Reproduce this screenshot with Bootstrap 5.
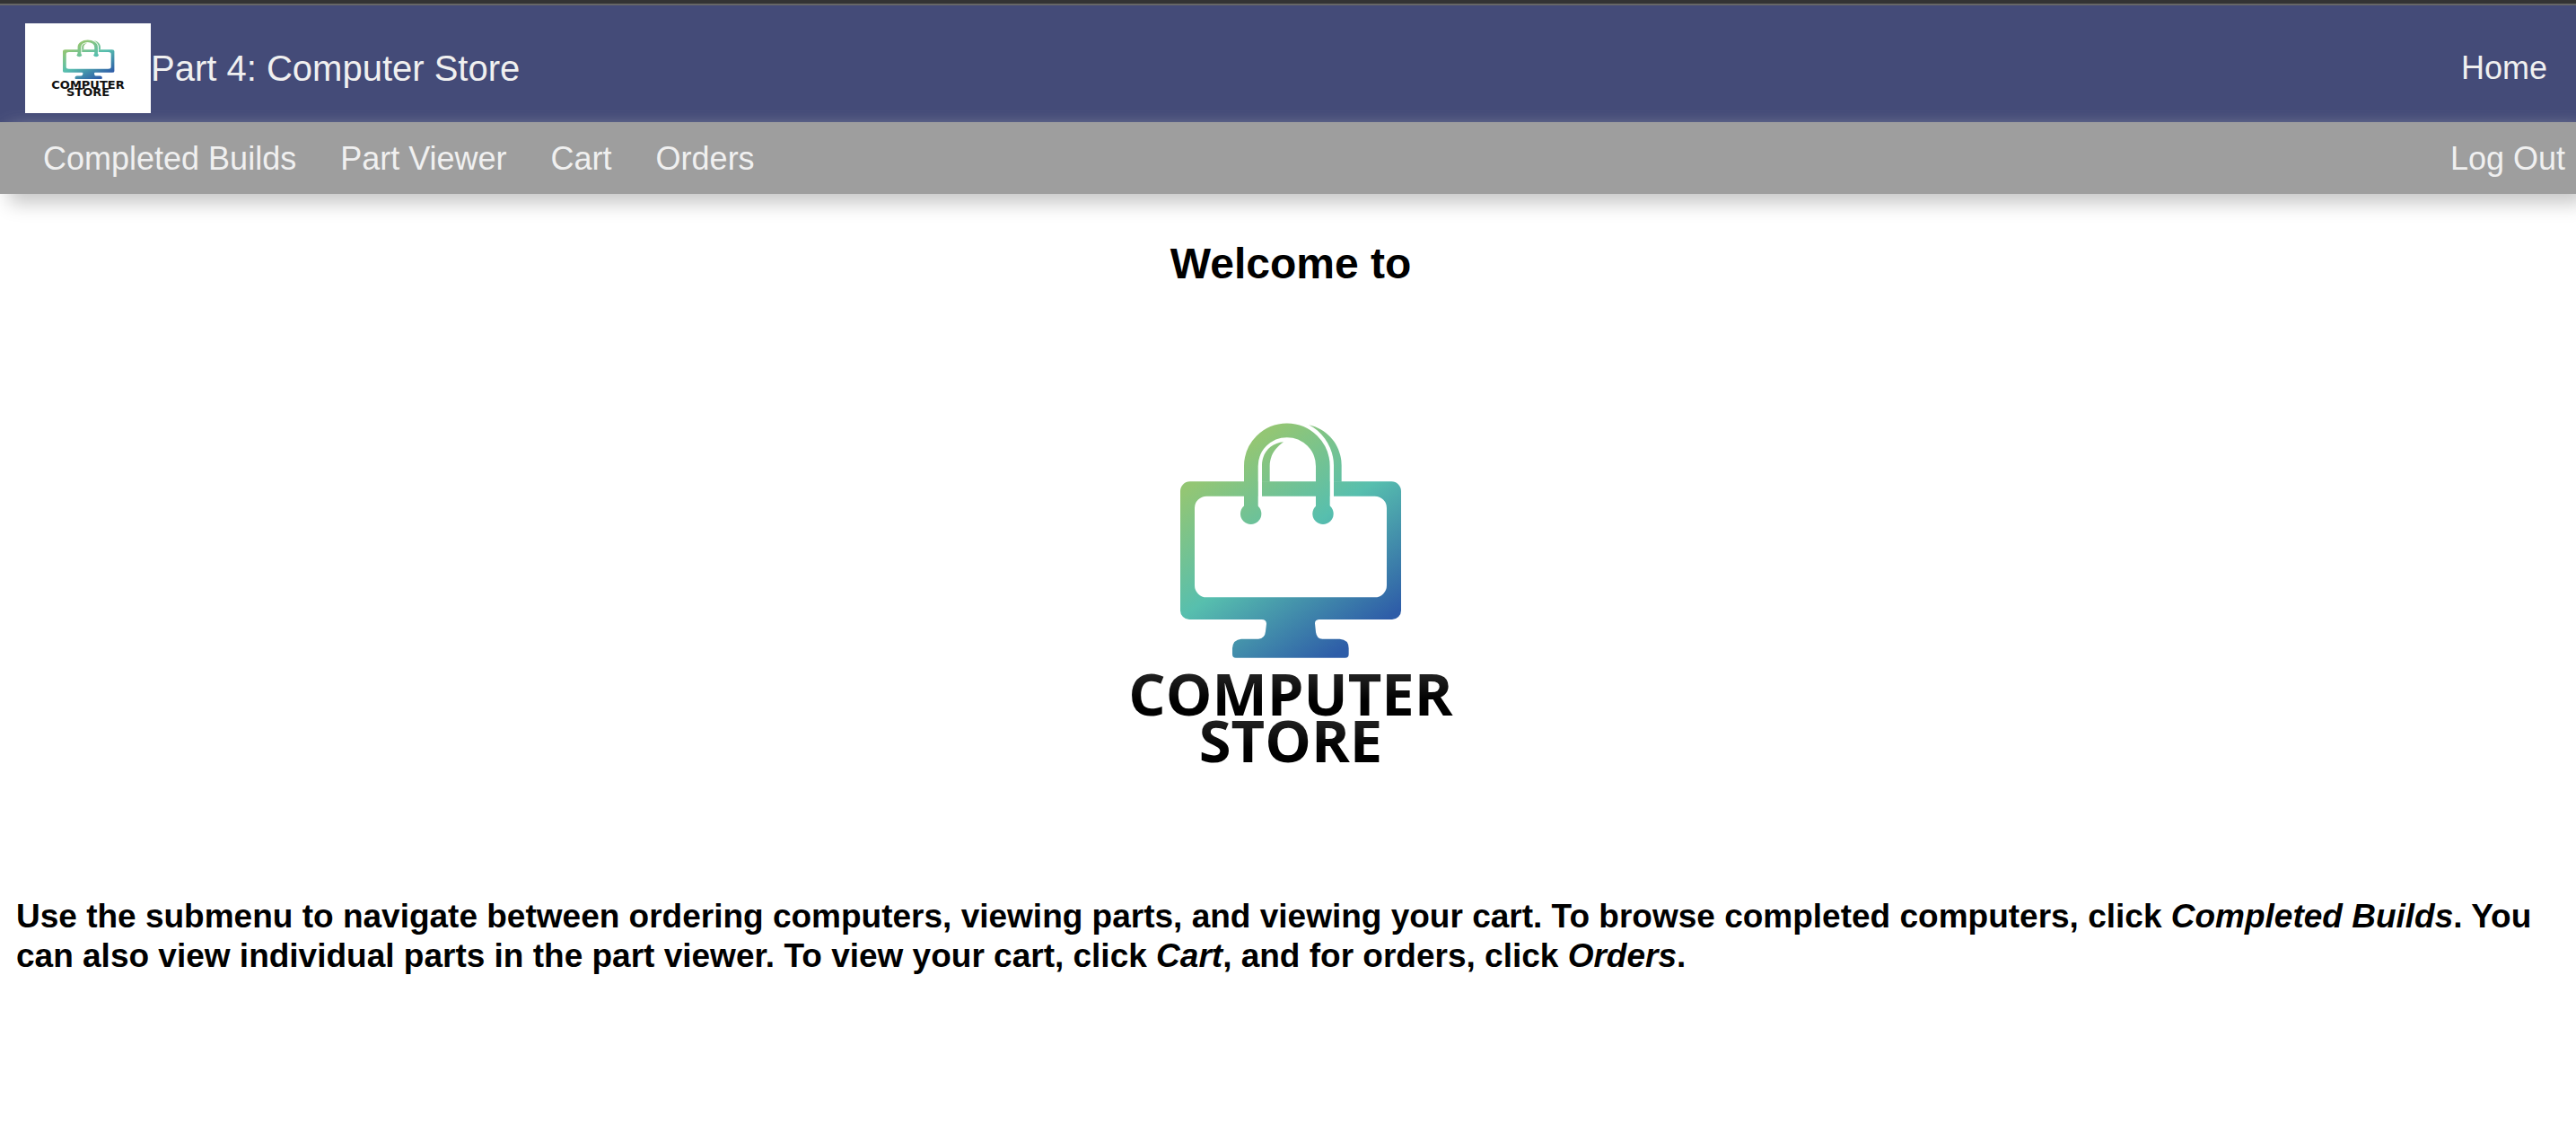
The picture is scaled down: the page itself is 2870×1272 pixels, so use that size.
<!DOCTYPE html>
<html lang="en">
<head>
<meta charset="utf-8">
<meta name="viewport" content="width=device-width, initial-scale=1">
<title>Part 4: Computer Store</title>
<link href="https://cdn.jsdelivr.net/npm/bootstrap@5.3.0/dist/css/bootstrap.min.css" rel="stylesheet">
<style>
  body { font-family: "Liberation Sans", Helvetica, Arial, sans-serif; color: #000; background: #fff; }
  .window-edge { height: 6px; background: #333; border-bottom: 2px solid #666; }
  .main-bar { background: #444b78; padding: 20px 32px 10px 28px; font-size: 36px; line-height: 40px; }
  .main-bar a, .sub-bar a { color: #f0f0f0; text-decoration: none; }
  .main-bar .navbar-brand { font-size: 40px; line-height: 40px; }
  .brand-logo { width: 140px; height: 100px; background: #fff; }
  .sub-bar { position: relative; background: #9e9e9e; padding: 21px 12px 19px 48px; font-size: 36px; line-height: 40px; box-shadow: 10px 10px 20px #c6c6c6; }
  .sub-links { gap: 49px; }
  .page-body { padding: 50px 12px 0 18px; }
  .welcome { font-size: 48px; line-height: 56px; font-weight: 700; margin: 0 0 39px; }
  .hero-logo { width: 600px; max-width: 100%; height: auto; }
  .intro { font-size: 37px; line-height: 44px; font-weight: 700; margin: 38px 0; }
  .word { font-family: "Open Sans", "Noto Sans", sans-serif; font-weight: 700; font-size: 65px; text-anchor: middle; }
  .tiny-word { font-family: "DejaVu Sans", sans-serif; font-weight: 700; font-size: 13px; text-anchor: middle; fill: #111; }
</style>
</head>
<body>
<svg class="position-absolute" width="0" height="0" aria-hidden="true">
  <defs>
    <linearGradient id="brandFade" gradientUnits="userSpaceOnUse" x1="552" y1="785" x2="976" y2="1389">
      <stop offset="0" stop-color="#93c674"/>
      <stop offset=".46" stop-color="#57bfae"/>
      <stop offset="1" stop-color="#2e5da8"/>
    </linearGradient>
    <linearGradient id="ink" x1="0" y1="0" x2="0" y2="1">
      <stop offset=".25" stop-color="#222"/>
      <stop offset=".6" stop-color="#000"/>
    </linearGradient>
    <g id="bagMonitor" fill="url(#brandFade)">
      <path fill-rule="evenodd" d="M377 889H1051A32 32 0 0 1 1083 921V1320A30 30 0 0 1 1053 1350H808Q795 1351 795 1363L798 1392Q801 1415 820 1415H878Q908 1417 908 1446V1466Q908 1478 896 1478H531Q519 1478 519 1466V1446Q521 1417 549 1415H606Q628 1414 630 1390L633 1364Q633 1350 617 1350H375A30 30 0 0 1 345 1320V921A32 32 0 0 1 377 889ZM433 938A40 40 0 0 0 393 978V1236A40 40 0 0 0 433 1276H995A40 40 0 0 0 1035 1236V978A40 40 0 0 0 995 938Z"/>
      <path fill="#fff" d="M604 885H618V945H604ZM844 885H858V945H844Z"/>
      <path fill="none" stroke="url(#brandFade)" stroke-width="47" d="M581.5 980V838A120 120 0 0 1 821.5 838V980"/>
      <circle cx="581" cy="997" r="35"/>
      <circle cx="822" cy="997" r="35"/>
      <path d="M618 890V835C618 790 650 760 690 757C659 780 644 805 644 838V890Z"/>
      <path d="M775 700C840 715 884 770 884 835V890H858V835C858 780 825 725 775 700Z"/>
    </g>
  </defs>
</svg>

<div class="window-edge"></div>
<header>
  <nav class="main-bar d-flex align-items-center justify-content-between" aria-label="Main">
    <a class="navbar-brand d-flex align-items-center m-0 p-0" href="#">
      <svg class="brand-logo" viewBox="0 0 140 100" role="img" aria-label="Computer Store logo">
        <g transform="scale(.23333 .16667) translate(65 -121) scale(.33333)"><use href="#bagMonitor"/></g>
        <text class="tiny-word" x="70" y="73">COMPUTER</text>
        <text class="tiny-word" x="70" y="81">STORE</text>
      </svg>
      <span>Part 4: Computer Store</span>
    </a>
    <a href="#">Home</a>
  </nav>
  <nav class="sub-bar d-flex justify-content-between" aria-label="Store">
    <div class="sub-links d-flex flex-wrap">
      <a href="#">Completed Builds</a>
      <a href="#">Part Viewer</a>
      <a href="#">Cart</a>
      <a href="#">Orders</a>
    </div>
    <a href="#">Log Out</a>
  </nav>
</header>
<main class="page-body">
  <h1 class="welcome text-center">Welcome to</h1>
  <svg class="hero-logo d-block mx-auto" viewBox="0 0 600 600" role="img" aria-label="Computer Store">
    <g transform="translate(62 -121) scale(.33333)"><use href="#bagMonitor"/></g>
    <text class="word" fill="url(#ink)" x="300" y="436">COMPUTER</text>
    <text class="word" fill="url(#ink)" x="300" y="488">STORE</text>
  </svg>
  <p class="intro">Use the submenu to navigate between ordering computers, viewing parts, and viewing your cart. To browse completed computers, click <em>Completed Builds</em>. You can also view individual parts in the part viewer. To view your cart, click <em>Cart</em>, and for orders, click <em>Orders</em>.</p>
</main>
<script src="https://cdn.jsdelivr.net/npm/bootstrap@5.3.0/dist/js/bootstrap.bundle.min.js"></script>
</body>
</html>
